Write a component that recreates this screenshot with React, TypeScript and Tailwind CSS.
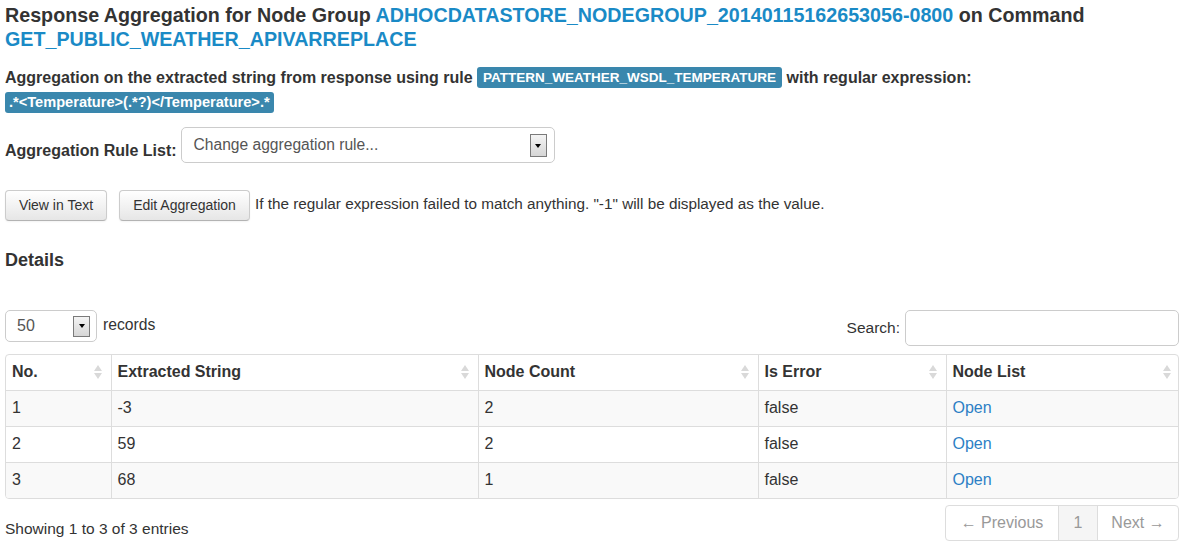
import React from "react";

function DropBtn({ className = "" }: { className?: string }) {
  return (
    <div
      className={`flex items-center justify-center border border-[#7a7a7a] bg-gradient-to-b from-[#f4f4f4] to-[#d6d6d6] ${className}`}
    >
      <div className="w-0 h-0 border-l-[3.5px] border-r-[3.5px] border-t-[4px] border-l-transparent border-r-transparent border-t-black" />
    </div>
  );
}

function SortIcon() {
  return (
    <div className="flex flex-col items-center gap-[2px]">
      <div className="w-0 h-0 border-l-[4px] border-r-[4px] border-b-[6px] border-l-transparent border-r-transparent border-b-[#d9d9d9]" />
      <div className="w-0 h-0 border-l-[4px] border-r-[4px] border-t-[6px] border-l-transparent border-r-transparent border-t-[#d9d9d9]" />
    </div>
  );
}

const cols = [
  { name: "No.", w: "w-[105px]" },
  { name: "Extracted String", w: "w-[367px]" },
  { name: "Node Count", w: "w-[280px]" },
  { name: "Is Error", w: "w-[188px]" },
  { name: "Node List", w: "w-[234px]" },
];

const rows = [
  ["1", "-3", "2", "false"],
  ["2", "59", "2", "false"],
  ["3", "68", "1", "false"],
];

export default function App() {
  return (
    <div
      className="w-[1189px] h-[548px] bg-white text-[#333] pl-[5px] pr-[10px] overflow-hidden"
      style={{ fontFamily: '"Liberation Sans", Arial, sans-serif' }}
    >
      <h1 className="text-[19.7px] leading-[24px] font-bold pt-[3px]">
        Response Aggregation for Node Group{" "}
        <span className="text-[#1a8ac6]">ADHOCDATASTORE_NODEGROUP_20140115162653056-0800</span> on Command{" "}
        <span className="text-[#1a8ac6]">GET_PUBLIC_WEATHER_APIVARREPLACE</span>
      </h1>

      <div className="mt-[16px] text-[16px] font-bold leading-[21px]">
        Aggregation on the extracted string from response using rule{" "}
        <span className="inline-block bg-[#3a87ad] text-white text-[13.5px] leading-[21px] px-[6px] rounded-[3px] align-top">
          PATTERN_WEATHER_WSDL_TEMPERATURE
        </span>{" "}
        with regular expression:
      </div>
      <div className="mt-[4px] flex">
        <span className="inline-block bg-[#3a87ad] text-white text-[14.6px] font-bold leading-[21px] px-[4px] rounded-[3px]">
          .*&lt;Temperature&gt;(.*?)&lt;/Temperature&gt;.*
        </span>
      </div>

      <div className="mt-[14px] flex items-center gap-[4px]">
        <div className="text-[16px] font-bold pt-[11px]">Aggregation Rule List:</div>
        <div className="w-[374px] h-[36px] border border-[#ccc] rounded-[5px] flex items-center justify-between pl-[12px] pr-[7px]">
          <span className="text-[15.6px] text-[#555] -mt-[1px]">Change aggregation rule...</span>
          <DropBtn className="w-[17px] h-[23px] mt-[1px]" />
        </div>
      </div>

      <div className="mt-[27px] flex items-center">
        <button className="h-[31px] w-[102px] text-[14px] text-[#333] border border-[#ccc] border-b-[#b3b3b3] rounded-[4px] bg-gradient-to-b from-white to-[#e6e6e6] shadow-[inset_0_1px_0_rgba(255,255,255,0.2),0_1px_2px_rgba(0,0,0,0.05)]">
          View in Text
        </button>
        <button className="ml-[12px] h-[31px] w-[131px] text-[14px] text-[#333] border border-[#ccc] border-b-[#b3b3b3] rounded-[4px] bg-gradient-to-b from-white to-[#e6e6e6] shadow-[inset_0_1px_0_rgba(255,255,255,0.2),0_1px_2px_rgba(0,0,0,0.05)]">
          Edit Aggregation
        </button>
        <span className="ml-[5px] text-[15.3px] -mt-[3px]">
          If the regular expression failed to match anything. "-1" will be displayed as the value.
        </span>
      </div>

      <h2 className="mt-[27px] text-[18px] font-bold leading-[24px]">Details</h2>

      <div className="mt-[38px] flex justify-between items-start">
        <div className="flex items-center">
          <div className="w-[92px] h-[32px] border border-[#ccc] rounded-[5px] flex items-center justify-between pl-[11px] pr-[6px]">
            <span className="text-[16px] text-[#555]">50</span>
            <DropBtn className="w-[17px] h-[21px]" />
          </div>
          <span className="ml-[6px] text-[15.7px] -mt-[2px]">records</span>
        </div>
        <div className="flex items-center">
          <span className="text-[15.5px] mr-[5px]">Search:</span>
          <div className="w-[274px] h-[36px] border border-[#ccc] rounded-[5px]" />
        </div>
      </div>

      <div className="mt-[8px] border border-[#ddd] rounded-[4px] overflow-hidden w-[1174px]">
        <table className="w-full border-collapse text-[16px] table-fixed">
          <thead>
            <tr className="h-[35px]">
              {cols.map((c, i) => (
                <th
                  key={c.name}
                  className={`${c.w} text-left font-bold pl-[6px] pr-[9px] ${i > 0 ? "border-l border-[#ddd]" : ""}`}
                >
                  <div className="flex items-center justify-between">
                    <span>{c.name}</span>
                    <SortIcon />
                  </div>
                </th>
              ))}
            </tr>
          </thead>
          <tbody>
            {rows.map((r, ri) => (
              <tr key={ri} className={`h-[36px] border-t border-[#ddd] ${ri % 2 === 0 ? "bg-[#f9f9f9]" : "bg-white"}`}>
                {r.map((v, ci) => (
                  <td key={ci} className={`px-[6px] ${ci > 0 ? "border-l border-[#ddd]" : ""}`}>
                    {v}
                  </td>
                ))}
                <td className="px-[6px] border-l border-[#ddd] text-[#2d7fc5]">Open</td>
              </tr>
            ))}
          </tbody>
        </table>
      </div>

      <div className="mt-[6px] flex justify-between items-start">
        <span className="text-[15.5px] mt-[12px]">Showing 1 to 3 of 3 entries</span>
        <div className="flex h-[36px] border border-[#ddd] rounded-[4px] text-[16px] text-[#999] overflow-hidden">
          <div className="w-[112px] flex items-center justify-center">← Previous</div>
          <div className="w-[40px] flex items-center justify-center bg-[#f5f5f5] border-l border-r border-[#ddd]">1</div>
          <div className="w-[80px] flex items-center justify-center">Next →</div>
        </div>
      </div>
    </div>
  );
}
